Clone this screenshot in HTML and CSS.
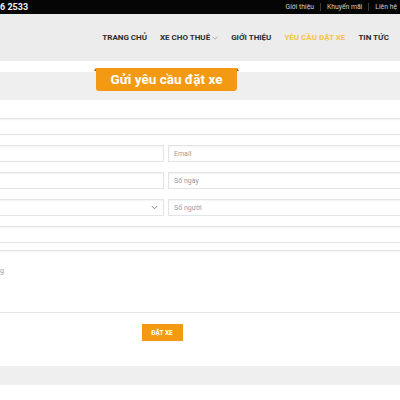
FILE: index.html
```html
<!DOCTYPE html>
<html lang="vi">
<head>
<meta charset="utf-8">
<title>Gửi yêu cầu đặt xe</title>
<link rel="stylesheet" href="styles.css">
</head>
<body>
<div class="topbar">
  <div class="phone">6 2533</div>
  <div class="toplinks">
    <a class="toplink">Giới thiệu</a>
    <a class="toplink">Khuyến mãi</a>
    <a class="toplink">Liên hệ</a>
  </div>
</div>
<header class="header">
  <nav class="nav">
    <a class="nav-item">TRANG CHỦ</a>
    <a class="nav-item">XE CHO THUÊ <svg class="caret" width="6" height="4" viewBox="0 0 6 4"><path d="M0.5 0.8 L3 3.2 L5.5 0.8" fill="none" stroke="#999" stroke-width="0.8"/></svg></a>
    <a class="nav-item">GIỚI THIỆU</a>
    <a class="nav-item active">YÊU CẦU ĐẶT XE</a>
    <a class="nav-item">TIN TỨC</a>
  </nav>
</header>
<div class="gap-strip"></div>
<div class="title-band">
  <h1 class="title-tab">Gửi yêu cầu đặt xe</h1>
</div>
<main class="content">
  <form class="form">
    <input class="field full" type="text" placeholder="Địa điểm đón khách">
    <input class="field" type="text" placeholder="Họ và tên">
    <input class="field" type="text" placeholder="Email">
    <input class="field" type="text" placeholder="Số điện thoại">
    <input class="field" type="text" placeholder="Số ngày">
    <div class="select-wrap">
      <select class="field select">
        <option>Chọn loại xe</option>
      </select>
      <svg class="select-arrow" width="7" height="5" viewBox="0 0 7 5"><path d="M0.8 1 L3.5 3.8 L6.2 1" fill="none" stroke="#777" stroke-width="0.9"/></svg>
    </div>
    <input class="field" type="text" placeholder="Số người">
    <input class="field full" type="text" placeholder="Ngày khởi hành">
    <textarea class="field full area" placeholder="Ghi chú&#10;Lịch trình, yêu cầu, nội dung"></textarea>
    <div class="actions full">
      <button class="submit" type="button">ĐẶT XE</button>
    </div>
  </form>
</main>
<footer class="footer-band"></footer>
</body>
</html>
```

FILE: styles.css
```css
html, body {
  margin: 0;
  padding: 0;
  background: #ffffff;
  font-family: Roboto, "Liberation Sans", Arial, sans-serif;
  overflow: hidden;
}

.topbar {
  height: 14px;
  background: #050505;
  display: flex;
  align-items: center;
  justify-content: space-between;
  padding-right: 3px;
}

.phone {
  color: #f2f2f2;
  font-weight: 700;
  font-size: 9px;
}

.toplinks {
  display: flex;
  align-items: center;
}

.toplink {
  color: #cfcfcf;
  font-size: 6.8px;
  padding: 0 6px;
  line-height: 8px;
  border-left: 1px solid #3a3a3a;
}

.toplink:first-child {
  border-left: none;
}

.toplink:last-child {
  padding-right: 0;
}

.header {
  height: 47px;
  background: #ececec;
  display: flex;
  align-items: center;
  justify-content: flex-end;
  padding-right: 11px;
}

.nav {
  display: flex;
  align-items: center;
  gap: 13px;
}

.nav-item {
  color: #2b2b2b;
  font-weight: 700;
  font-size: 8px;
  display: flex;
  align-items: center;
  gap: 2px;
}

.nav-item.active {
  color: #f6c344;
}

.caret {
  display: block;
}

.gap-strip {
  height: 11px;
}

.title-band {
  height: 28px;
  background: #efefef;
  display: flex;
  align-items: flex-start;
  padding-left: 96px;
}

.title-tab {
  position: relative;
  margin: -4px 0 0 0;
  width: 141px;
  height: 23px;
  box-sizing: border-box;
  background: #f39a12;
  color: #ffffff;
  font-weight: 700;
  font-size: 13.5px;
  line-height: 23px;
  text-align: center;
  border-radius: 0 0 3px 3px;
}

.title-tab::before,
.title-tab::after {
  content: "";
  position: absolute;
  top: 0;
  width: 0;
  height: 0;
  border-bottom: 3px solid #9a5a00;
}

.title-tab::before {
  left: -2px;
  border-left: 2px solid transparent;
}

.title-tab::after {
  right: -2px;
  border-right: 2px solid transparent;
}

.content {
  padding-top: 18px;
}

.form {
  margin-left: -88px;
  width: 508px;
  display: grid;
  grid-template-columns: 1fr 1fr;
  column-gap: 4px;
  row-gap: 10px;
}

.full {
  grid-column: 1 / -1;
}

.field {
  display: block;
  width: 100%;
  height: 17px;
  box-sizing: border-box;
  margin: 0;
  border: 1px solid #e4e4e4;
  border-radius: 0;
  background: #ffffff;
  box-shadow: inset 0 1px 2px rgba(0, 0, 0, 0.05);
  font-family: Roboto, "Liberation Sans", Arial, sans-serif;
  font-size: 7px;
  color: #555;
  padding: 0 5px;
  outline: none;
}

.field::placeholder {
  color: #9a9a9a;
}

.select-wrap {
  position: relative;
}

.select {
  appearance: none;
  -webkit-appearance: none;
  color: #777;
}

.select-arrow {
  position: absolute;
  right: 6px;
  top: 6px;
}

.area {
  height: 63px;
  margin-top: -3px;
  padding: 5px 5px;
  line-height: 10px;
  resize: none;
}

.actions {
  display: flex;
  justify-content: center;
  margin-top: 1px;
  padding-right: 8px;
}

.submit {
  width: 41px;
  height: 17px;
  border: none;
  background: #f39a12;
  color: #ffffff;
  font-family: Roboto, "Liberation Sans", Arial, sans-serif;
  font-weight: 700;
  font-size: 6.5px;
  padding: 0;
  cursor: pointer;
}

.footer-band {
  margin-top: 25px;
  height: 19px;
  background: #efefef;
}
```
